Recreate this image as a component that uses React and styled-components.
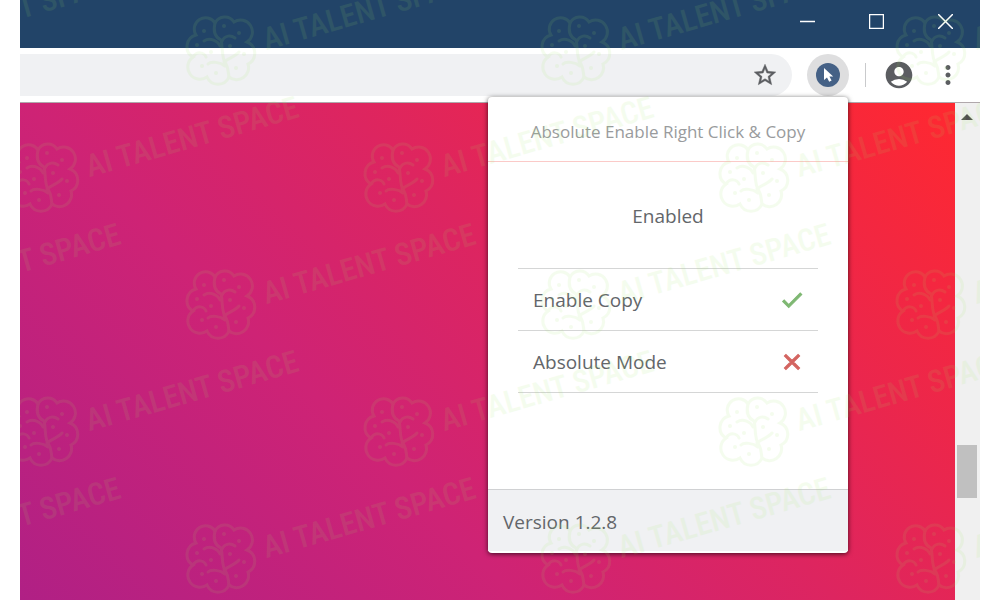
import { useState } from "react";
import styled, { createGlobalStyle } from "styled-components";
import {
  MdAccountCircle,
  MdCheck,
  MdClose,
  MdMoreVert,
  MdStarBorder,
} from "react-icons/md";

const marks = [0, 1, 2, 3, 4].flatMap((row) =>
  [0, 1, 2, 3].map((col) => ({
    x: (row % 2 ? 23 : 200) + (col - 1) * 355,
    y: 49 + row * 127,
  }))
);

const Mark = () => (
  <>
    <symbol id="mark" overflow="visible">
      <g fill="none" stroke="currentColor" strokeWidth="3" strokeLinecap="round">
        <path d="M-24 -14A11 11 0 0 1 -5 -26A11 11 0 0 1 14 -27A11 11 0 0 1 27 -7A12 12 0 0 1 28 15A12 12 0 0 1 9 28A12 12 0 0 1 -13 28A12 12 0 0 1 -27 8A12 12 0 0 1 -24 -14Z" />
        <path d="M-5 -26C-7 -18 -5 -12 1 -9C3 -3 1 9 6 15C9 20 8 24 9 28" />
        <path d="M-16 -8C-10 -12 -2 -8 0 -3M2 -8C5 -14 11 -14 15 -11M-27 8C-23 2 -16 3 -14 8M4 13C8 9 15 8 19 3M-12 15C-9 12 0 13 5 17" />
      </g>
      <g fill="currentColor">
        <circle cx="-16" cy="-18" r="2" />
        <circle cx="4" cy="-23" r="2" />
        <circle cx="19" cy="-16" r="2" />
        <circle cx="-23" cy="-4" r="2" />
        <circle cx="-9" cy="3" r="2" />
        <circle cx="10" cy="-3" r="2" />
        <circle cx="24" cy="5" r="2" />
        <circle cx="-18" cy="17" r="2" />
        <circle cx="-4" cy="24" r="2" />
        <circle cx="16" cy="19" r="2" />
      </g>
      <text x="44" y="14" transform="rotate(-16)">
        AI TALENT SPACE
      </text>
    </symbol>
    {marks.map(({ x, y }) => (
      <use key={`${x}-${y}`} href="#mark" x={x} y={y} />
    ))}
  </>
);

const App = () => {
  const [enabled, setEnabled] = useState(true);
  const [copy, setCopy] = useState(true);
  const [absolute, setAbsolute] = useState(false);

  const options = [
    { label: "Enable Copy", value: copy, onChange: setCopy },
    { label: "Absolute Mode", value: absolute, onChange: setAbsolute },
  ];

  return (
    <>
      <GlobalStyle />
      <Window>
        <TitleBar>
          <WindowButton aria-label="Minimize">
            <svg width="15" height="15">
              <path d="M0 7.5h15" />
            </svg>
          </WindowButton>
          <WindowButton aria-label="Maximize">
            <svg width="15" height="15">
              <path d="M.5.5h14v14H.5z" />
            </svg>
          </WindowButton>
          <WindowButton aria-label="Close">
            <svg width="15" height="15">
              <path d="M0 0l15 15M15 0L0 15" />
            </svg>
          </WindowButton>
        </TitleBar>
        <Toolbar>
          <AddressBar>
            <AddressInput type="text" aria-label="Address" />
            <IconButton aria-label="Bookmark this page">
              <StarIcon size={26} />
            </IconButton>
          </AddressBar>
          <ExtensionButton aria-label="Extension">
            <svg width="24" height="24" viewBox="0 0 24 24">
              <circle cx="12" cy="12" r="12" fill="#456186" />
              <path
                d="M8 5v12l3-2.6 2.2 4.4 2.4-1.2-2.2-4.2h3.8z"
                fill="#fff"
              />
            </svg>
          </ExtensionButton>
          <Divider />
          <IconButton aria-label="Profile">
            <MdAccountCircle size={32} />
          </IconButton>
          <IconButton aria-label="Menu">
            <MdMoreVert size={30} />
          </IconButton>
          <Popup>
            <PopupHeader>Absolute Enable Right Click &amp; Copy</PopupHeader>
            <PopupMain>
              <StatusButton onClick={() => setEnabled(!enabled)}>
                {enabled ? "Enabled" : "Disabled"}
              </StatusButton>
              <OptionList>
                {options.map(({ label, value, onChange }) => (
                  <Option key={label}>
                    <OptionLabel>
                      {label}
                      <OptionInput
                        type="checkbox"
                        checked={value}
                        onChange={(e) => onChange(e.target.checked)}
                      />
                      {value ? <CheckIcon size={26} /> : <CrossIcon size={26} />}
                    </OptionLabel>
                  </Option>
                ))}
              </OptionList>
            </PopupMain>
            <PopupFooter>Version 1.2.8</PopupFooter>
          </Popup>
        </Toolbar>
        <Content>
          <Page />
          <Scrollbar>
            <svg width="12" height="6">
              <path d="M0 6l6-6 6 6z" fill="#505050" />
            </svg>
            <Track>
              <Thumb />
            </Track>
          </Scrollbar>
        </Content>
        <Watermark aria-hidden="true">
          <Mark />
        </Watermark>
      </Window>
    </>
  );
};

const GlobalStyle = createGlobalStyle`
  * {
    box-sizing: border-box;
  }
  body {
    margin: 0;
    background: #fff;
    font-family: "Open Sans", "Noto Sans", sans-serif;
  }
  button {
    border: none;
    padding: 0;
    background: none;
    font: inherit;
    color: inherit;
    cursor: pointer;
  }
`;
const Window = styled.div`
  position: relative;
  display: flex;
  flex-direction: column;
  min-height: 100vh;
  margin: 0 20px;
  overflow: hidden;
`;
const TitleBar = styled.header`
  display: flex;
  justify-content: flex-end;
  height: 48px;
  padding-bottom: 6px;
  background: #224468;
`;
const WindowButton = styled.button`
  display: flex;
  align-items: center;
  justify-content: center;
  width: 69px;

  path {
    fill: none;
    stroke: #fff;
    stroke-width: 1.5;
  }
`;
const Toolbar = styled.div`
  position: relative;
  display: flex;
  align-items: center;
  height: 55px;
  padding: 0 17px 1px 0;
  background: #fff;
  border-bottom: 1px solid #b0a8ac;
`;
const AddressBar = styled.div`
  display: flex;
  flex: 1;
  align-items: center;
  height: 42px;
  margin-right: 15px;
  padding-right: 14px;
  background: #f0f1f3;
  border-radius: 0 21px 21px 0;
`;
const AddressInput = styled.input`
  flex: 1;
  min-width: 0;
  height: 100%;
  padding: 0 16px;
  border: none;
  outline: none;
  background: transparent;
  font: inherit;
`;
const IconButton = styled.button`
  display: flex;
  color: #5b5d61;
`;
const StarIcon = styled(MdStarBorder)`
  path:not([fill="none"]) {
    stroke: currentColor;
    stroke-width: 0.4;
  }
`;
const ExtensionButton = styled(IconButton)`
  align-items: center;
  justify-content: center;
  width: 42px;
  height: 42px;
  background: #dededf;
  border-radius: 50%;
`;
const Divider = styled.div`
  width: 1px;
  height: 24px;
  margin: 0 17px 0 16px;
  background: #c9cacc;

  & + button {
    margin-right: 18px;
  }
`;
const Popup = styled.section`
  position: absolute;
  top: 49px;
  right: 132px;
  z-index: 1;
  display: flex;
  flex-direction: column;
  width: 360px;
  height: 456px;
  padding-bottom: 2px;
  background: #fff;
  border-radius: 4px;
  box-shadow: 0 1px 5px rgba(0, 0, 0, 0.7);
  color: #63666a;
  font-size: 19px;
  line-height: 24px;
`;
const PopupHeader = styled.h1`
  margin: 0;
  padding: 23px 0 17px;
  border-bottom: 1px solid #fbcac8;
  color: #999b9d;
  font-size: 17px;
  font-weight: normal;
  line-height: 24px;
  text-align: center;
`;
const PopupMain = styled.div`
  flex: 1;
  padding: 0 30px;
`;
const StatusButton = styled.button`
  display: block;
  width: 100%;
  height: 106px;
  padding-top: 2px;
`;
const OptionList = styled.ul`
  margin: 0;
  padding: 0;
  border-top: 1px solid #d5d6d6;
  list-style: none;
`;
const Option = styled.li`
  border-bottom: 1px solid #d5d6d6;
`;
const OptionLabel = styled.label`
  display: flex;
  align-items: center;
  justify-content: space-between;
  height: 61px;
  padding: 0 13px 0 15px;
  cursor: pointer;
`;
const OptionInput = styled.input`
  position: absolute;
  opacity: 0;
  pointer-events: none;
`;
const CheckIcon = styled(MdCheck)`
  color: #7fb873;

  path:not([fill="none"]) {
    stroke: currentColor;
    stroke-width: 1;
  }
`;
const CrossIcon = styled(MdClose)`
  color: #d3635f;

  path:not([fill="none"]) {
    stroke: currentColor;
    stroke-width: 1;
  }
`;
const PopupFooter = styled.footer`
  padding: 20px 15px 17px;
  background: #f0f1f3;
  border-top: 1px solid #d0d1d3;
`;
const Content = styled.main`
  display: flex;
  flex: 1;
`;
const Page = styled.div`
  flex: 1;
  background: linear-gradient(
    45deg,
    #b02085 0%,
    #ce2375 35%,
    #dd2560 57%,
    #ff2830 100%
  );
`;
const Scrollbar = styled.div`
  display: flex;
  flex-direction: column;
  align-items: center;
  width: 25px;
  padding: 11px 3px 0 2px;
  background: #f0f0f0;
`;
const Track = styled.div`
  display: flex;
  flex: 1;
  flex-direction: column;
  width: 100%;
  padding-top: 325px;
`;
const Thumb = styled.div`
  height: 53px;
  background: #c0c0c0;
`;
const Watermark = styled.svg`
  position: absolute;
  inset: 0;
  z-index: 2;
  width: 100%;
  height: 100%;
  color: #a0e860;
  opacity: 0.1;
  pointer-events: none;

  text {
    fill: currentColor;
    font-family: "Liberation Sans Narrow", "Roboto Condensed",
      "Liberation Sans", sans-serif;
    font-size: 31px;
    font-weight: 500;
  }
`;

export default App;
